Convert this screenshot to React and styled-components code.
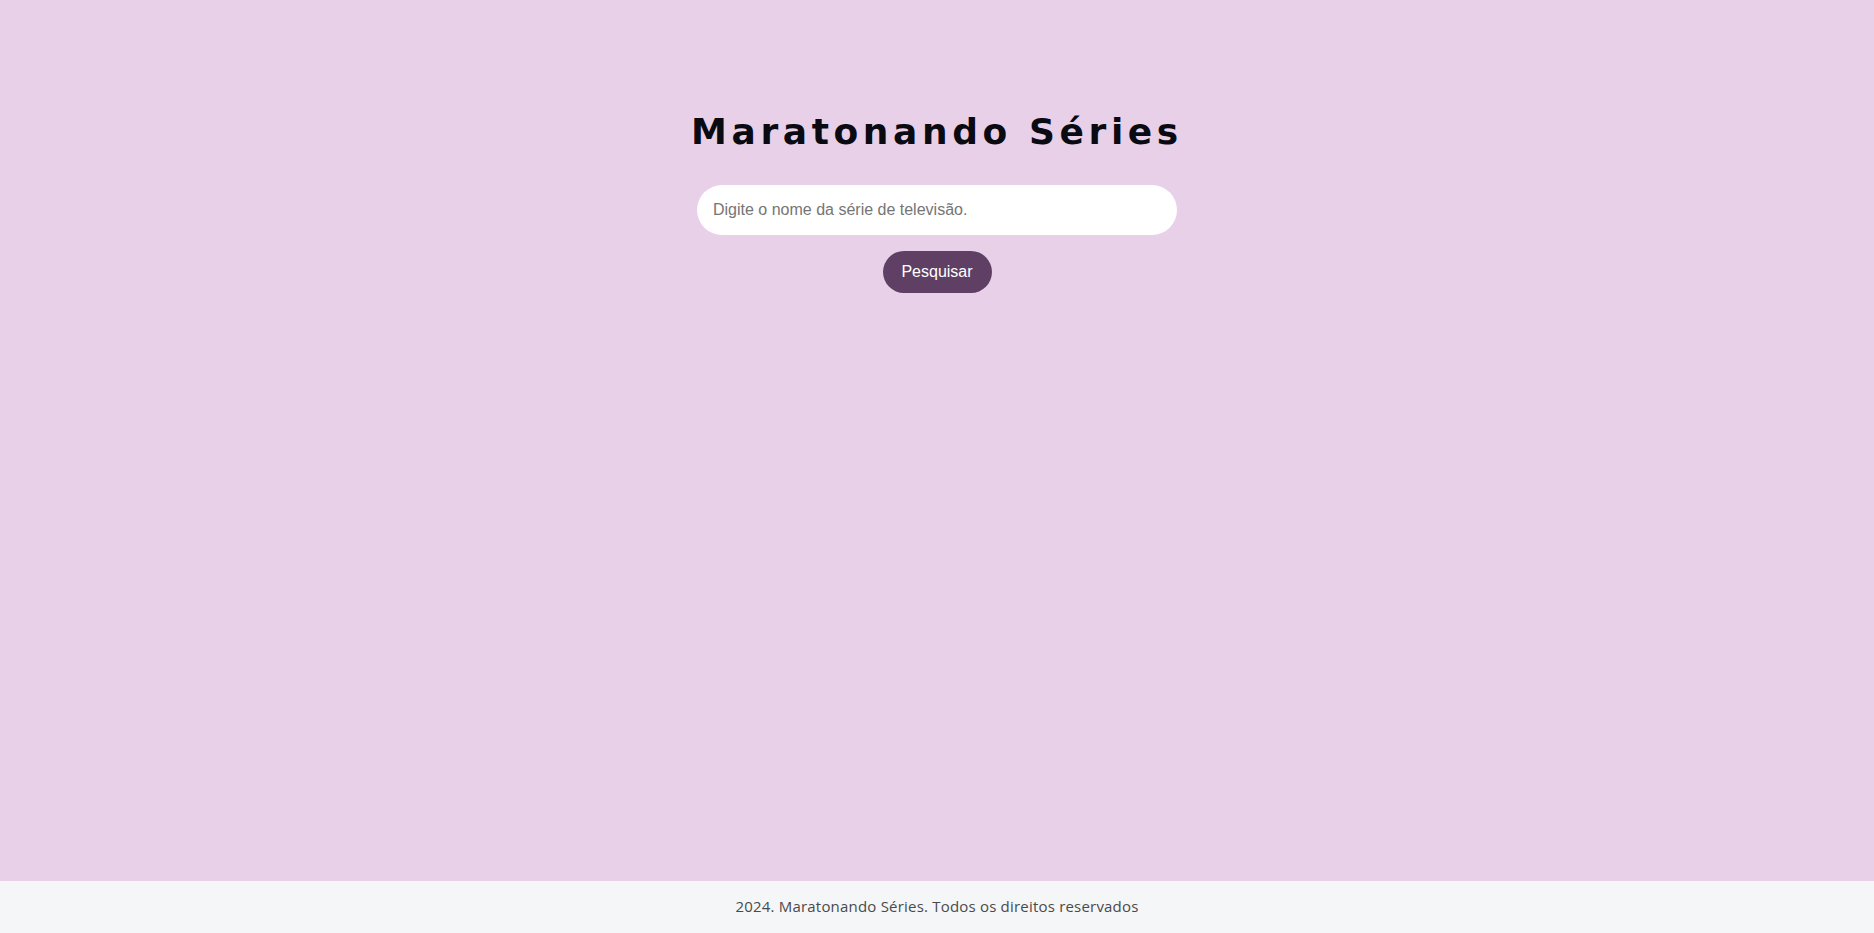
import React from "react";
import styled, { createGlobalStyle } from "styled-components";

const Global = createGlobalStyle`
  html, body { margin: 0; padding: 0; height: 100%; }
  body { background: #e8d0e8; font-family: "Liberation Sans", Arial, sans-serif; }
  #root { min-height: 100vh; display: flex; flex-direction: column; }
`;

const Main = styled.main`
  flex: 1;
  display: flex;
  flex-direction: column;
  align-items: center;
  padding-top: 110px;
`;

const Title = styled.h1`
  margin: 0 0 31px;
  font-family: "DejaVu Sans", sans-serif;
  font-weight: 700;
  font-size: 36px;
  line-height: 44px;
  letter-spacing: 4.6px;
  color: #0a0a12;
`;

const SearchInput = styled.input`
  box-sizing: border-box;
  width: 480px;
  height: 50px;
  border: none;
  border-radius: 25px;
  background: #fff;
  padding: 0 16px;
  font-family: "Liberation Sans", Arial, sans-serif;
  font-size: 16px;
  color: #333;
  outline: none;
  &::placeholder { color: #757575; }
`;

const Button = styled.button`
  margin-top: 16px;
  width: 109px;
  height: 42px;
  border: none;
  border-radius: 21px;
  background: #5f4064;
  color: #fff;
  font-family: "Liberation Sans", Arial, sans-serif;
  font-size: 16px;
  cursor: pointer;
`;

const Footer = styled.footer`
  height: 52px;
  background: #f5f6f8;
  display: flex;
  align-items: center;
  justify-content: center;
  font-family: "Open Sans", sans-serif;
  font-size: 15px;
  letter-spacing: 0.2px;
  color: #4a4a4a;
  padding-bottom: 2px;
  box-sizing: border-box;
`;

export default function App() {
  return (
    <>
      <Global />
      <Main>
        <Title>Maratonando Séries</Title>
        <SearchInput placeholder="Digite o nome da série de televisão." />
        <Button>Pesquisar</Button>
      </Main>
      <Footer>2024. Maratonando Séries. Todos os direitos reservados</Footer>
    </>
  );
}
